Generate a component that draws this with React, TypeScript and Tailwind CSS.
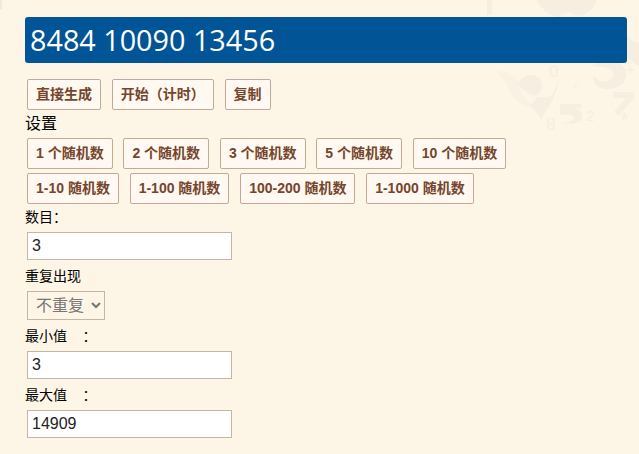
const sans = "font-['Liberation_Sans','Noto_Sans_CJK_SC',sans-serif]";

const row1 = ["1 个随机数", "2 个随机数", "3 个随机数", "5 个随机数", "10 个随机数"];
const row2 = ["1-10 随机数", "1-100 随机数", "100-200 随机数", "1-1000 随机数"];

const Btn = ({ label }: { label: string }) => (
  <button className="h-[31px] px-2 border border-[#c4a995] rounded-[2px] bg-[#fff9f2] text-[14px] font-bold text-[#75452c] whitespace-nowrap">
    {label}
  </button>
);

const Field = ({ value }: { value: string }) => (
  <input
    readOnly
    value={value}
    className="block ml-[2px] mt-[5px] w-[205px] h-[28px] px-[4px] border border-[#c4b5a6] bg-white text-[16px] text-[#222] outline-none"
  />
);

const Label = ({ children }: { children: React.ReactNode }) => (
  <div className="h-[20px] leading-[20px] mt-[6px] whitespace-pre">{children}</div>
);

// faint number swirl in the page background
const Backdrop = () => (
  <svg className="absolute top-0 right-0 pointer-events-none" width="159" height="140" viewBox="480 0 159 140" fill="#f6eee0">
    <path d="M487 0 h5 v15 h-5 z" />
    <path d="M537 0 q6 14 22 17 q10 -8 14 -2 q16 4 24 -15 z" />
    <path d="M627 36 q8 8 12 6 v24 q-8 -4 -12 -10 z" />
    <path d="M497 72 q16 -4 22 14 q4 14 16 22 q-18 -2 -25 -16 q-4 -12 -13 -20 z" fillOpacity="0.5" />
    <path d="M517 84 q10 -14 22 -6 q8 10 -4 18 q10 4 18 -2 l6 -16 q-2 16 -10 28 l-8 14 q-4 -10 -12 -14 q6 -4 8 -10 q-10 -2 -20 -12 z" />
    <path d="M590 66 q18 -8 30 -2 q10 8 4 18 q-10 10 -24 6 q-8 -4 -6 -12 q8 10 18 2 q4 -8 -4 -10 q-8 -2 -18 -2 z" />
    <path d="M613 92 h20 l2 5 l-16 18 l-5 -3 l12 -14 h-13 z" />
    <path d="M560 104 h22 l-1 4 h-11 q14 0 12 10 q-4 8 -20 5 q10 0 12 -5 q0 -4 -14 -3 z" />
    <text x="586" y="121" fontSize="15" fontFamily="Liberation Sans">2</text>
    <text x="549" y="77" fontSize="17" fontFamily="Liberation Sans">0</text>
    <text x="572" y="90" fontSize="13" fontFamily="Liberation Sans">÷</text>
    <text x="620" y="127" fontSize="22" fontFamily="Liberation Sans">*</text>
    <text x="626" y="74" fontSize="15" fontFamily="Liberation Sans">+</text>
    <text x="546" y="130" fontSize="17" fontFamily="Liberation Sans">8</text>
  </svg>
);

export default function App() {
  return (
    <div className={`relative w-[639px] h-[454px] overflow-hidden bg-[#fdf5e6] text-[14px] text-black ${sans}`}>
      <Backdrop />
      <div className="absolute top-0 left-0 w-[2px] h-[9px] bg-[#f1e9db]" />
      <div className="relative pl-[25px] pr-[12px] pt-[17px]">
        <div className="h-[46px] flex items-center pl-[5px] bg-[#015496] rounded-[3px] text-[28.75px] text-white font-['Open_Sans','Noto_Sans',sans-serif]">
          8484 10090 13456
        </div>
        <div className="flex gap-[10.75px] ml-[2px] mt-[16px]">
          <Btn label="直接生成" />
          <Btn label="开始（计时）" />
          <Btn label="复制" />
        </div>
        <div className="h-[20px] leading-[20px] mt-[4px] text-[16px]">设置</div>
        <div className="flex gap-[10.75px] ml-[2px] mt-[4px]">
          {row1.map((t) => <Btn key={t} label={t} />)}
        </div>
        <div className="flex gap-[10.75px] ml-[2px] mt-[4px]">
          {row2.map((t) => <Btn key={t} label={t} />)}
        </div>
        <div className="h-[20px] leading-[20px] mt-[3px]">数目：</div>
        <Field value="3" />
        <Label>重复出现</Label>
        <select className="block ml-[2px] mt-[5px] w-[78px] h-[29px] pl-[4px] border border-[#c4b5a6] bg-[#fdf5e6] text-[16px] text-[#767676]">
          <option>不重复</option>
        </select>
        <Label>最小值    ：</Label>
        <Field value="3" />
        <Label>最大值    ：</Label>
        <Field value="14909" />
      </div>
    </div>
  );
}
